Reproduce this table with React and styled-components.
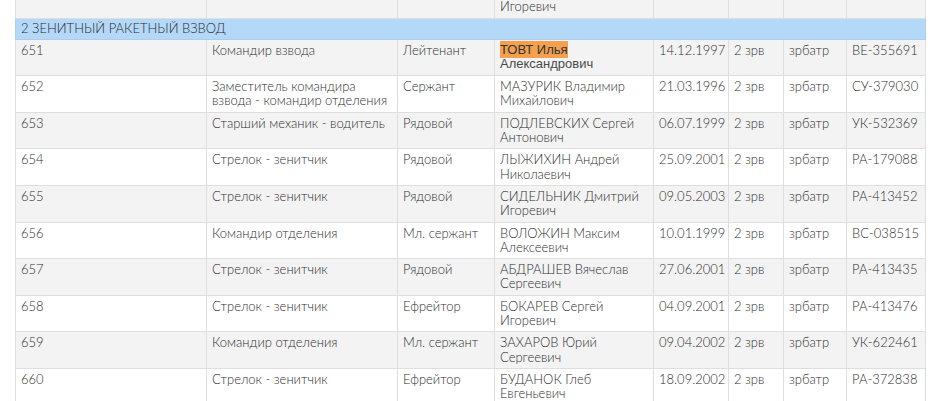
import React from 'react'
import styled, { createGlobalStyle } from 'styled-components'

const Global = createGlobalStyle`
  html, body {
    margin: 0;
    padding: 0;
    background: #fff;
  }
`

const Viewport = styled.div`
  height: 401px;
  overflow: hidden;
  padding: 0 14px 0 15px;
`

const Table = styled.table`
  width: 910px;
  margin-top: -19px;
  border-collapse: collapse;
  table-layout: fixed;
  font-family: Lato, "Open Sans", sans-serif;
  font-weight: 300;
  font-size: 13px;
  color: #2f2f2f;
`

const Row = styled.tr`
  background: ${props => (props.$odd ? '#f3f3f3' : '#ffffff')};
`

const Cell = styled.td`
  border: 1px solid #dedede;
  padding: 3px 5px 4px;
  line-height: 14.3px;
  vertical-align: top;
  overflow: hidden;
`

const GroupRow = styled.tr`
  background: #b4d8f8;
`

const GroupCell = styled.td`
  border: 1px solid #a9cfee;
  padding: 2px 5px 3px;
  line-height: 15px;
  text-transform: uppercase;
  color: #2a2a2a;
`

const Line = styled.span`
  display: block;
  white-space: nowrap;
  min-height: 14.3px;
`

const PlainName = styled.div`
  font-family: "Liberation Sans", Arial, sans-serif;
  font-weight: 400;
  font-size: 13px;
  color: #4a4a4a;
`

const Highlight = styled.span`
  background: #f4a04f;
  color: #333;
  padding: 1px 0;
`

const widths = [191, 191, 97, 159, 75, 55, 63, 79]

// the row above the group is scrolled almost out of view: only its tail shows
const hiddenRow = ['', '', '', ['', 'Игоревич'], '', '']

const people = [
  ['651', 'Командир взвода', 'Лейтенант', ['ТОВТ Илья', 'Александрович'], '14.12.1997', 'ВЕ-355691', true],
  ['652', 'Заместитель командира взвода - командир отделения', 'Сержант', ['МАЗУРИК Владимир', 'Михайлович'], '21.03.1996', 'СУ-379030'],
  ['653', 'Старший механик - водитель', 'Рядовой', ['ПОДЛЕВСКИХ Сергей', 'Антонович'], '06.07.1999', 'УК-532369'],
  ['654', 'Стрелок - зенитчик', 'Рядовой', ['ЛЫЖИХИН Андрей', 'Николаевич'], '25.09.2001', 'РА-179088'],
  ['655', 'Стрелок - зенитчик', 'Рядовой', ['СИДЕЛЬНИК Дмитрий', 'Игоревич'], '09.05.2003', 'РА-413452'],
  ['656', 'Командир отделения', 'Мл. сержант', ['ВОЛОЖИН Максим', 'Алексеевич'], '10.01.1999', 'ВС-038515'],
  ['657', 'Стрелок - зенитчик', 'Рядовой', ['АБДРАШЕВ Вячеслав', 'Сергеевич'], '27.06.2001', 'РА-413435'],
  ['658', 'Стрелок - зенитчик', 'Ефрейтор', ['БОКАРЕВ Сергей', 'Игоревич'], '04.09.2001', 'РА-413476'],
  ['659', 'Командир отделения', 'Мл. сержант', ['ЗАХАРОВ Юрий', 'Сергеевич'], '09.04.2002', 'УК-622461'],
  ['660', 'Стрелок - зенитчик', 'Ефрейтор', ['БУДАНОК Глеб', 'Евгеньевич'], '18.09.2002', 'РА-372838'],
]

const PersonRow = ({ p, odd }) => {
  const [num, post, rank, name, born, ticket, found] = p
  return (
    <Row $odd={odd}>
      <Cell>{num}</Cell>
      <Cell>{post}</Cell>
      <Cell>{rank}</Cell>
      <Cell>
        {found ? (
          <PlainName>
            <Line><Highlight>{name[0]}</Highlight></Line>
            <Line>{name[1]}</Line>
          </PlainName>
        ) : (
          <>
            <Line>{name[0]}</Line>
            <Line>{name[1]}</Line>
          </>
        )}
      </Cell>
      <Cell>{born}</Cell>
      <Cell>2 зрв</Cell>
      <Cell>зрбатр</Cell>
      <Cell>{ticket}</Cell>
    </Row>
  )
}

const App = () => {
  return (
    <Viewport>
      <Global />
      <Table>
        <colgroup>
          {widths.map((w, i) => (
            <col key={i} style={{ width: w }} />
          ))}
        </colgroup>
        <tbody>
          <PersonRow p={hiddenRow} odd />
          <GroupRow>
            <GroupCell colSpan={8}>2 зенитный ракетный взвод</GroupCell>
          </GroupRow>
          {people.map((p, i) => (
            <PersonRow key={p[0]} p={p} odd={i % 2 === 0} />
          ))}
        </tbody>
      </Table>
    </Viewport>
  )
}

export default App
